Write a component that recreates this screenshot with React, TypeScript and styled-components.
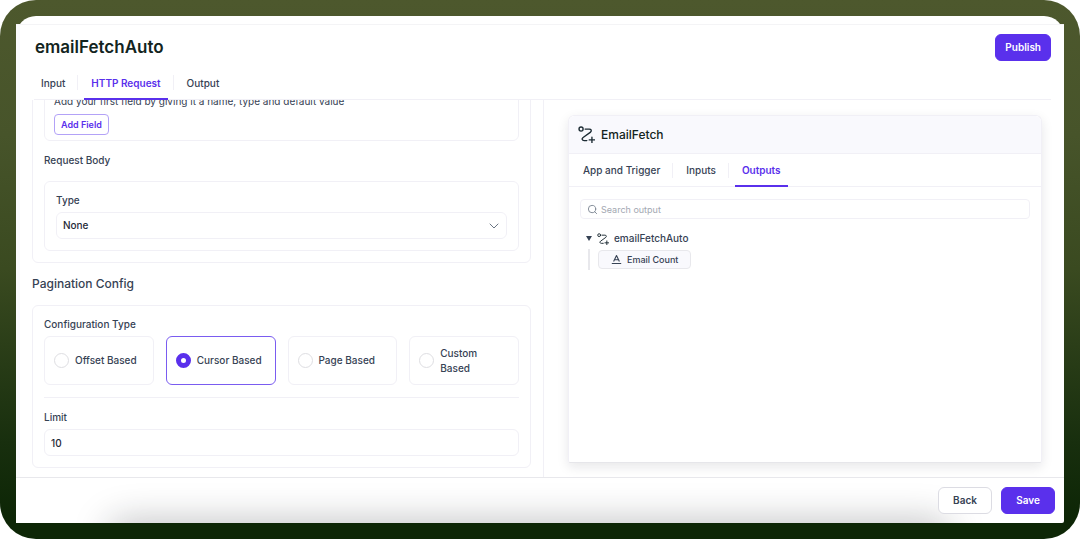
import React, { useState } from 'react';
import styled, { createGlobalStyle, css } from 'styled-components';
import { ChevronDown, Search } from 'lucide-react';

const color = {
  brand: '#5a30ec',
  brandSoft: '#b3a2f7',
  ink: '#122420',
  text: '#364254',
  muted: '#a3a8b2',
  line: '#f1f0f6',
  lineStrong: '#e8e8ec',
  tint: '#f9f9fd',
};

const GlobalStyle = createGlobalStyle`
  *, *::before, *::after { box-sizing: border-box; }
  body {
    margin: 0;
    background: #fff;
    font-family: Inter, "Liberation Sans", sans-serif;
    font-size: 10px;
    line-height: 15px;
    font-weight: 500;
    color: ${color.text};
  }
  button, input, select { font: inherit; color: inherit; }
`;

const Frame = styled.div`
  display: flex;
  flex-direction: column;
  height: 100vh;
  padding: 16px;
  border-radius: 36px;
  background: linear-gradient(180deg, #4d582d 0%, #47542a 25%, #3a4a20 50%, #182f0e 82%, #0d2606 96%);
`;

/* Rounded shoulder that shows above the square-edged window. */
const WindowCap = styled.div`
  flex: none;
  height: 20px;
  margin-bottom: -12px;
  border-radius: 20px 20px 0 0;
  background: #fff;
`;

const Window = styled.main`
  flex: 1;
  min-height: 0;
  display: flex;
  flex-direction: column;
  background: #fff;
  border-top: 1px solid #f4f4f6;
  border-radius: 0 0 2px 0;
  overflow: hidden;
`;

const Workspace = styled.div`
  flex: 1;
  min-height: 0;
  display: flex;
  flex-direction: column;
  border-left: 4px solid #fafafc;
`;

const Header = styled.header`
  display: flex;
  justify-content: space-between;
  align-items: center;
  padding: 9px 13px 0 15px;
`;

const Title = styled.h1`
  margin: 0;
  font-size: 17px;
  line-height: 27px;
  font-weight: 600;
  color: ${color.ink};
`;

const Button = styled.button<{ $primary?: boolean }>`
  min-width: 54px;
  height: 27px;
  padding: 0 9px;
  border: 1px solid ${({ $primary }) => ($primary ? color.brand : '#dcdce3')};
  border-radius: 6px;
  background: ${({ $primary }) => ($primary ? color.brand : '#fff')};
  color: ${({ $primary }) => ($primary ? '#fff' : color.text)};
  font-weight: 600;
`;

const TabList = styled.nav<{ $inset?: boolean }>`
  position: relative;
  z-index: 1;
  display: flex;
  align-items: center;
  height: ${({ $inset }) => ($inset ? 33 : 34)}px;
  margin: ${({ $inset }) => ($inset ? '0' : '5px 13px 0 14px')};
  padding-left: ${({ $inset }) => ($inset ? 7 : 0)}px;
  border-bottom: 1px solid ${color.line};
`;

const TabSlot = styled.div`
  display: flex;
  align-items: center;
  align-self: stretch;

  & + &::before {
    content: '';
    width: 1px;
    height: 15px;
    margin: 0 6px 0 5px;
    background: ${color.line};
  }
`;

const Tab = styled.button<{ $active?: boolean }>`
  align-self: stretch;
  margin-bottom: -1px;
  padding: 2px 7px 0;
  border: 0;
  border-bottom: 2px solid ${({ $active }) => ($active ? color.brand : 'transparent')};
  background: none;
  color: ${({ $active }) => ($active ? color.brand : color.text)};
  font-weight: ${({ $active }) => ($active ? 600 : 500)};
`;

const Columns = styled.div`
  flex: 1;
  min-height: 0;
  display: grid;
  grid-template-columns: minmax(0, 524fr) minmax(0, 520fr);
`;

/* Reversed so that the pane opens scrolled to its last section. */
const FormPane = styled.section`
  display: flex;
  flex-direction: column-reverse;
  min-height: 0;
  overflow-y: auto;
  scrollbar-width: none;
  padding: 0 12px 9px;
  border-right: 1px solid ${color.line};
`;

const FormBody = styled.div`
  flex: none;
`;

const Card = styled.div`
  padding: 11px;
  border: 1px solid ${color.line};
  border-radius: 6px;
`;

const EmptyField = styled(Card)`
  padding: 12px 9px 5px;
`;

const EmptyText = styled.p`
  margin: 0 0 5px;
  font-weight: 400;
`;

const SmallButton = styled.button`
  display: block;
  height: 21px;
  padding: 0 6px;
  border: 1px solid ${color.brandSoft};
  border-radius: 4px;
  background: #fff;
  color: ${color.brand};
  font-size: 9px;
  line-height: 12px;
  font-weight: 600;
`;

const GroupTitle = styled.h3`
  margin: 12px 0 13px;
  font-size: 10px;
  line-height: 15px;
  font-weight: 500;
`;

const SectionTitle = styled.h2`
  margin: 12px 0;
  font-size: 12px;
  line-height: 18px;
  font-weight: 500;
`;

const Label = styled.label`
  display: block;
  margin-bottom: 4px;
`;

const control = css`
  display: block;
  width: 100%;
  height: 27px;
  padding: 0 6px;
  border: 1px solid ${color.line};
  border-radius: 6px;
  background: #fff;
  color: #1f2a37;
`;

const TextInput = styled.input`
  ${control}
`;

const SelectWrap = styled.div`
  position: relative;

  svg {
    position: absolute;
    right: 5px;
    top: 6px;
    pointer-events: none;
    color: #6b7684;
  }
`;

const Select = styled.select`
  ${control}
  appearance: none;
`;

const OptionSet = styled.fieldset`
  margin: 0 0 12px;
  padding: 0 0 12px;
  border: 0;
  border-bottom: 1px solid ${color.line};
`;

const Legend = styled.legend`
  padding: 0 0 4px;
`;

const OptionGrid = styled.div`
  display: grid;
  grid-template-columns: repeat(4, minmax(0, 1fr));
  gap: 12px;
`;

const Option = styled.label<{ $checked: boolean }>`
  display: flex;
  align-items: center;
  gap: 6px;
  min-height: 49px;
  padding: 0 9px;
  border: 1px solid ${({ $checked }) => ($checked ? '#7a5cf0' : color.line)};
  border-radius: 6px;
`;

const Radio = styled.input`
  appearance: none;
  flex: none;
  width: 15px;
  height: 15px;
  margin: 0;
  border: 1px solid #dedee2;
  border-radius: 50%;
  background: #fff;

  &:checked {
    border: 5px solid ${color.brand};
  }
`;

const PreviewPane = styled.section`
  display: flex;
  min-height: 0;
  padding: 15px 22px 14px 24px;
`;

const Preview = styled.div`
  flex: 1;
  min-width: 0;
  border: 1px solid ${color.line};
  border-bottom-color: #e6e6ea;
  border-radius: 6px 6px 2px 2px;
  box-shadow: 0 4px 12px rgba(20, 20, 40, 0.1);
`;

const PreviewHeader = styled.div`
  display: flex;
  align-items: center;
  gap: 6px;
  height: 38px;
  padding: 0 9px;
  border-bottom: 1px solid ${color.line};
  border-radius: 6px 6px 0 0;
  background: ${color.tint};
`;

const PreviewTitle = styled.h2`
  margin: 0;
  font-size: 12px;
  line-height: 18px;
  font-weight: 500;
  color: ${color.ink};
`;

const PreviewBody = styled.div`
  padding: 12px 11px;
`;

const SearchBox = styled.label`
  display: flex;
  align-items: center;
  gap: 3px;
  height: 20px;
  padding: 0 6px;
  border: 1px solid ${color.line};
  border-radius: 4px;
  color: #7b8492;
`;

const SearchInput = styled.input`
  flex: 1;
  min-width: 0;
  padding: 0;
  border: 0;
  outline: 0;
  background: none;
  font-size: 9px;
  font-weight: 400;

  &::placeholder {
    color: ${color.muted};
    opacity: 1;
  }
`;

const Tree = styled.ul`
  margin: 11px 0 0;
  padding: 0 6px;
  list-style: none;
`;

const TreeNode = styled.div`
  display: flex;
  align-items: center;
  gap: 5px;
  height: 17px;
`;

const Caret = styled.svg`
  flex: none;
  color: ${color.text};
`;

const Branch = styled.ul`
  margin: 2px 0 0 2px;
  padding: 1px 0 1px 8px;
  border-left: 2px solid ${color.lineStrong};
  list-style: none;
`;

const Chip = styled.span`
  display: inline-flex;
  vertical-align: top;
  align-items: center;
  gap: 5px;
  height: 19px;
  padding: 0 12px;
  border: 1px solid ${color.lineStrong};
  border-radius: 4px;
  background: ${color.tint};
  font-size: 9px;
  line-height: 12px;
`;

const Footer = styled.footer`
  position: relative;
  flex: none;
  display: flex;
  justify-content: flex-end;
  gap: 9px;
  padding: 9px;
  border-top: 1px solid ${color.lineStrong};
  overflow: hidden;

  &::before {
    content: '';
    position: absolute;
    left: 9%;
    right: 11%;
    top: 100%;
    height: 30px;
    border-radius: 20px;
    box-shadow: 0 0 36px 2px rgba(20, 24, 34, 0.28);
  }

  button {
    position: relative;
  }
`;

function FlowIcon({ size, stroke }: { size: number; stroke: number }) {
  return (
    <svg width={size} height={size} viewBox="0 0 50 50" fill="none" stroke="#1c2b33" strokeWidth={stroke} strokeLinecap="round" strokeLinejoin="round" aria-hidden>
      <circle cx="9" cy="9" r="6" />
      <path d="M21 9h12c6 0 8 5 4 9L15 34c-5 4-3 9 3 9h8" />
      <path d="M41 33v16M33 41h16" />
    </svg>
  );
}

function TextTypeIcon() {
  return (
    <svg width="11" height="11" viewBox="0 0 11 11" fill="none" stroke="#364254" strokeLinejoin="round" aria-hidden>
      <path d="M2.6 7.5 5.5 1.5 8.4 7.5M3.6 5.7H7.4" strokeWidth="1.1" />
      <path d="M0.8 9.5H10.2" strokeWidth="1" />
    </svg>
  );
}

const pageTabs = ['Input', 'HTTP Request', 'Output'];
const previewTabs = ['App and Trigger', 'Inputs', 'Outputs'];
const paginationTypes = ['Offset Based', 'Cursor Based', 'Page Based', 'Custom Based'];

function Tabs({ items, initial, inset }: { items: string[]; initial: string; inset?: boolean }) {
  const [active, setActive] = useState(initial);
  return (
    <TabList $inset={inset}>
      {items.map((item) => (
        <TabSlot key={item}>
          <Tab type="button" $active={item === active} onClick={() => setActive(item)}>
            {item}
          </Tab>
        </TabSlot>
      ))}
    </TabList>
  );
}

export default function App() {
  const [pagination, setPagination] = useState('Cursor Based');

  return (
    <>
      <GlobalStyle />
      <Frame>
        <WindowCap />
        <Window>
          <Workspace>
            <Header>
              <Title>emailFetchAuto</Title>
              <Button type="button" $primary>Publish</Button>
            </Header>
            <Tabs items={pageTabs} initial="HTTP Request" />
            <Columns>
              <FormPane>
                <FormBody>
                  <Card>
                    <EmptyField>
                      <EmptyText>Add your first field by giving it a name, type and default value</EmptyText>
                      <SmallButton type="button">Add Field</SmallButton>
                    </EmptyField>
                    <GroupTitle>Request Body</GroupTitle>
                    <Card>
                      <Label htmlFor="body-type">Type</Label>
                      <SelectWrap>
                        <Select id="body-type" defaultValue="None">
                          <option>None</option>
                        </Select>
                        <ChevronDown size={16} strokeWidth={1.5} />
                      </SelectWrap>
                    </Card>
                  </Card>
                  <SectionTitle>Pagination Config</SectionTitle>
                  <Card>
                    <OptionSet>
                      <Legend>Configuration Type</Legend>
                      <OptionGrid>
                        {paginationTypes.map((type) => (
                          <Option key={type} $checked={type === pagination}>
                            <Radio
                              type="radio"
                              name="pagination"
                              checked={type === pagination}
                              onChange={() => setPagination(type)}
                            />
                            <span>{type}</span>
                          </Option>
                        ))}
                      </OptionGrid>
                    </OptionSet>
                    <Label htmlFor="limit">Limit</Label>
                    <TextInput id="limit" defaultValue="10" />
                  </Card>
                </FormBody>
              </FormPane>
              <PreviewPane>
                <Preview>
                  <PreviewHeader>
                    <FlowIcon size={17} stroke={4} />
                    <PreviewTitle>EmailFetch</PreviewTitle>
                  </PreviewHeader>
                  <Tabs items={previewTabs} initial="Outputs" inset />
                  <PreviewBody>
                    <SearchBox>
                      <Search size={11} strokeWidth={2} aria-hidden />
                      <SearchInput type="text" placeholder="Search output" aria-label="Search output" />
                    </SearchBox>
                    <Tree>
                      <li>
                        <TreeNode>
                          <Caret width="6" height="5" viewBox="0 0 6 5" aria-hidden>
                            <path d="M0 0h6L3 5z" fill="currentColor" />
                          </Caret>
                          <FlowIcon size={12} stroke={4} />
                          <span>emailFetchAuto</span>
                        </TreeNode>
                        <Branch>
                          <li>
                            <Chip>
                              <TextTypeIcon />
                              Email Count
                            </Chip>
                          </li>
                        </Branch>
                      </li>
                    </Tree>
                  </PreviewBody>
                </Preview>
              </PreviewPane>
            </Columns>
          </Workspace>
          <Footer>
            <Button type="button">Back</Button>
            <Button type="button" $primary>Save</Button>
          </Footer>
        </Window>
      </Frame>
    </>
  );
}
